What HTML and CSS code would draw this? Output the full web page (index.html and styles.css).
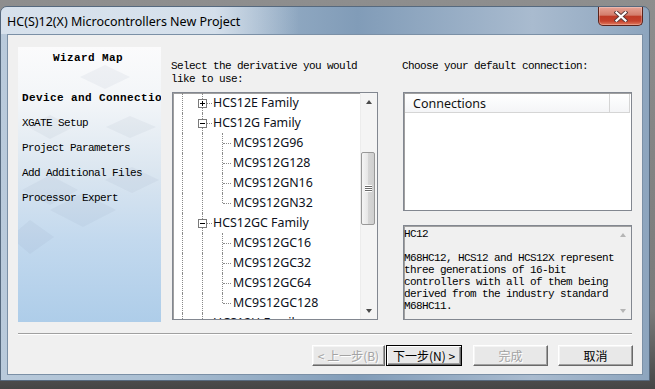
FILE: index.html
```html
<!DOCTYPE html>
<html lang="en">
<head>
  <meta charset="UTF-8">
  <title>HC(S)12(X) Microcontrollers New Project</title>
  <link rel="stylesheet" href="styles.css">
</head>
<body>

  <div class="window">
    <div class="titlebar">
      <span class="title">HC(S)12(X) Microcontrollers New Project</span>
      <div class="close">
        <svg width="14" height="11" viewBox="0 0 14 11">
          <path d="M2.5 1.5 L11.5 9.5 M11.5 1.5 L2.5 9.5" stroke="#5a3a3a" stroke-width="4" stroke-linecap="square" fill="none"/>
          <path d="M2.5 1.5 L11.5 9.5 M11.5 1.5 L2.5 9.5" stroke="#ffffff" stroke-width="2.2" stroke-linecap="square" fill="none"/>
        </svg>
      </div>
    </div>

    <div class="client">
      <div class="main">

        <div class="wizard">
          <svg class="wizard-bg" width="143" height="275" viewBox="0 0 143 275">
            <g fill="#6f859c" fill-opacity="0.07">
              <polygon points="62,30 87,18 112,30 87,42"/>
              <polygon points="10,80 32,68 56,80 32,92"/>
              <polygon points="88,80 112,69 138,80 112,91"/>
              <polygon points="4,143 32,128 60,143 32,158"/>
              <polygon points="32,163 65,146 98,163 65,180"/>
              <polygon points="87,133 114,120 141,133 114,146"/>
              <polygon points="-8,190 12,173 36,190 12,207"/>
            </g>
          </svg>
          <div class="wizard-title">Wizard Map</div>
          <ul class="steps">
            <li class="current">Device and Connection</li>
            <li>XGATE Setup</li>
            <li>Project Parameters</li>
            <li>Add Additional Files</li>
            <li>Processor Expert</li>
          </ul>
        </div>

        <div class="col-derivative">
          <p class="prompt">Select the derivative you would<br>like to use:</p>
          <div class="tree-box">
            <div class="tree">
              <div class="row">
                <div class="cell v"></div>
                <div class="cell v hbox"><span class="toggle plus"></span></div>
                <span class="label">HCS12E Family</span>
              </div>
              <div class="row">
                <div class="cell v"></div>
                <div class="cell v hbox"><span class="toggle"></span></div>
                <span class="label">HCS12G Family</span>
              </div>
              <div class="row">
                <div class="cell v"></div>
                <div class="cell v"></div>
                <div class="cell v h"></div>
                <span class="label">MC9S12G96</span>
              </div>
              <div class="row">
                <div class="cell v"></div>
                <div class="cell v"></div>
                <div class="cell v h"></div>
                <span class="label">MC9S12G128</span>
              </div>
              <div class="row">
                <div class="cell v"></div>
                <div class="cell v"></div>
                <div class="cell v h"></div>
                <span class="label">MC9S12GN16</span>
              </div>
              <div class="row">
                <div class="cell v"></div>
                <div class="cell v"></div>
                <div class="cell v h end"></div>
                <span class="label">MC9S12GN32</span>
              </div>
              <div class="row">
                <div class="cell v"></div>
                <div class="cell v hbox"><span class="toggle"></span></div>
                <span class="label">HCS12GC Family</span>
              </div>
              <div class="row">
                <div class="cell v"></div>
                <div class="cell v"></div>
                <div class="cell v h"></div>
                <span class="label">MC9S12GC16</span>
              </div>
              <div class="row">
                <div class="cell v"></div>
                <div class="cell v"></div>
                <div class="cell v h"></div>
                <span class="label">MC9S12GC32</span>
              </div>
              <div class="row">
                <div class="cell v"></div>
                <div class="cell v"></div>
                <div class="cell v h"></div>
                <span class="label">MC9S12GC64</span>
              </div>
              <div class="row">
                <div class="cell v"></div>
                <div class="cell v"></div>
                <div class="cell v h end"></div>
                <span class="label">MC9S12GC128</span>
              </div>
              <div class="row">
                <div class="cell v"></div>
                <div class="cell v hbox"><span class="toggle plus"></span></div>
                <span class="label">HCS12H Family</span>
              </div>
            </div>
            <div class="vscroll">
              <div class="arrow up"></div>
              <div class="track">
                <div class="thumb"><span class="grip"></span></div>
              </div>
              <div class="arrow down"></div>
            </div>
          </div>
        </div>

        <div class="col-connection">
          <p class="prompt">Choose your default connection:</p>
          <div class="list-box">
            <div class="list-head">
              <span class="head-col name">Connections</span>
              <span class="head-col rest"></span>
            </div>
          </div>
          <div class="desc-box">
            <pre class="desc">HC12

M68HC12, HCS12 and HCS12X represent
three generations of 16-bit
controllers with all of them being
derived from the industry standard
M68HC11.</pre>
            <div class="vscroll flat">
              <div class="arrow up"></div>
              <div class="track"></div>
              <div class="arrow down"></div>
            </div>
          </div>
        </div>

      </div>

      <div class="separator"></div>

      <div class="buttons">
        <button class="btn back" disabled>&lt; 上一步(B)</button>
        <button class="btn next">下一步(N) &gt;</button>
        <button class="btn finish" disabled>完成</button>
        <button class="btn cancel">取消</button>
      </div>
    </div>
  </div>

</body>
</html>
```

FILE: styles.css
```css
* { box-sizing: border-box; }

body {
  margin: 0;
  height: 389px;
  overflow: hidden;
  background: linear-gradient(#8e8e8e, #7a7a7a 80%, #454545);
  font-family: "Liberation Mono", monospace;
}

/* window frame */
.window {
  width: 650px;
  margin-top: 6px;
  padding: 0 6px 5px;
  border: 1px solid #56697e;
  border-radius: 7px 7px 0 0;
  background: linear-gradient(90deg, #b9cadb, #a9bed2 25%, #819cb8 55%, #a9bbcf 82%, #8da5be);
}

.titlebar {
  height: 27px;
  display: flex;
  justify-content: space-between;
  align-items: flex-start;
  background: linear-gradient(90deg, rgba(225,233,242,0.75), rgba(230,237,245,0.75) 33%, rgba(255,255,255,0) 46%);
  margin: 0 -6px;
  padding: 0 6px;
  border-radius: 6px 6px 0 0;
}

.title {
  font-family: "Noto Sans", sans-serif;
  font-size: 12.5px;
  line-height: 27px;
  color: #000;
  padding-top: 1px;
}

.close {
  width: 45px;
  height: 19px;
  display: flex;
  align-items: center;
  justify-content: center;
  border: 1px solid #5b231b;
  border-top: 0;
  border-radius: 0 0 5px 5px;
  background: linear-gradient(#e7a395, #d37d6c 45%, #bf3b27 52%, #c5412c 78%, #e27c60);
  box-shadow: inset 0 0 0 1px rgba(255,255,255,0.25);
}

.close svg { display: block; }

/* dialog body */
.client {
  height: 341px;
  padding: 12px 10px 0;
  background: #f0f0f0;
  border: 1px solid #7b90a6;
}

.main {
  display: flex;
  height: 275px;
}

/* wizard map */
.wizard {
  position: relative;
  width: 143px;
  height: 275px;
  flex: none;
  overflow: hidden;
  background: linear-gradient(#fbfbfc 0%, #f2f5f8 20%, #dbe6f0 45%, #c3d9ee 70%, #aecde9 100%);
}

.wizard-bg {
  position: absolute;
  left: 0;
  top: 0;
}

.wizard-title {
  position: relative;
  margin-top: 4px;
  line-height: 14px;
  font-size: 11px;
  font-weight: bold;
  letter-spacing: 0.4px;
  text-align: center;
  padding-right: 3px;
}

.steps {
  position: relative;
  list-style: none;
  margin: 21px 0 0;
  padding: 0 0 0 4px;
  font-size: 11px;
  letter-spacing: -0.6px;
  line-height: 25px;
  white-space: nowrap;
}

.steps .current {
  font-weight: bold;
  letter-spacing: 0.4px;
}

/* prompts */
.prompt {
  margin: 13px 0 0;
  font-size: 11px;
  letter-spacing: -0.6px;
  line-height: 13px;
  color: #000;
}

.col-derivative {
  width: 207px;
  margin-left: 10px;
  flex: none;
}

.col-connection {
  width: 230px;
  margin-left: 24px;
  flex: none;
}

/* tree view */
.tree-box {
  display: flex;
  width: 206px;
  height: 228px;
  margin: 6px 0 0 1px;
  background: #fff;
  border: 1px solid #828790;
  box-shadow: inset 1px 1px 0 #a0a0a0;
}

.tree {
  flex: 1;
  overflow: hidden;
}

.row {
  display: flex;
  align-items: center;
  height: 20px;
}

.cell {
  position: relative;
  width: 20px;
  height: 20px;
  flex: none;
}

.cell.v::before {
  content: '';
  position: absolute;
  left: 9px;
  top: 0;
  bottom: 0;
  border-left: 1px dotted #8a8a8a;
}

.cell.end::before { bottom: 10px; }

.cell.h::after {
  content: '';
  position: absolute;
  left: 10px;
  top: 10px;
  width: 8px;
  border-top: 1px dotted #8a8a8a;
}

.cell.hbox::after {
  content: '';
  position: absolute;
  left: 14px;
  top: 10px;
  width: 5px;
  border-top: 1px dotted #8a8a8a;
}

.toggle {
  position: absolute;
  left: 5px;
  top: 6px;
  width: 9px;
  height: 9px;
  background: #fff;
  border: 1px solid #7a7a7a;
  z-index: 1;
}

.toggle::before {
  content: '';
  position: absolute;
  left: 1px;
  top: 3px;
  width: 5px;
  height: 1px;
  background: #000;
}

.toggle.plus::after {
  content: '';
  position: absolute;
  left: 3px;
  top: 1px;
  width: 1px;
  height: 5px;
  background: #000;
}

.label {
  font-family: "Noto Sans", sans-serif;
  font-size: 12.4px;
  color: #0c1020;
  white-space: nowrap;
  line-height: 20px;
}

/* scrollbars */
.vscroll {
  width: 17px;
  flex: none;
  display: flex;
  flex-direction: column;
  background: #f4f4f4;
  border-left: 1px solid #ececec;
}

.arrow {
  height: 17px;
  display: flex;
  align-items: center;
  justify-content: center;
}

.arrow::before {
  content: '';
  border-left: 3.5px solid transparent;
  border-right: 3.5px solid transparent;
}

.arrow.up::before { border-bottom: 4px solid #4a4a4a; }
.arrow.down::before { border-top: 4px solid #4a4a4a; }

.track {
  flex: 1;
  padding-top: 42px;
}

.thumb {
  height: 73px;
  margin: 0 2px 0 0;
  border: 1px solid #989898;
  border-radius: 2px;
  background: linear-gradient(90deg, #f5f5f5, #e6e6e6 50%, #d6d6d6 51%, #cfcfcf);
  display: flex;
  align-items: center;
  justify-content: center;
}

.grip {
  width: 7px;
  height: 7px;
  background: repeating-linear-gradient(#fff 0 1px, #6a6a6a 1px 2px);
}

.vscroll.flat {
  background: transparent;
  border-left: 0;
}

.vscroll.flat .arrow.up::before { border-bottom-color: #b5b5b5; }
.vscroll.flat .arrow.down::before { border-top-color: #b5b5b5; }

/* connections list */
.list-box {
  width: 229px;
  height: 119px;
  margin: 19px 0 0 1px;
  background: #fff;
  border: 1px solid #828790;
  box-shadow: inset 1px 1px 0 #a0a0a0;
  padding: 1px 1px 0 1px;
}

.list-head {
  display: flex;
  height: 19px;
  background: linear-gradient(#ffffff, #f4f5f7);
  border-bottom: 1px solid #d5d5d5;
}

.head-col {
  height: 19px;
  border-right: 1px solid #d5d5d5;
  font-family: "Noto Sans", sans-serif;
  font-size: 12.5px;
  line-height: 19px;
  color: #111;
}

.head-col.name {
  width: 206px;
  padding-left: 8px;
}

.head-col.rest { width: 20px; }

/* description */
.desc-box {
  display: flex;
  width: 229px;
  height: 95px;
  margin: 14px 0 0 1px;
  background: #f0f0f0;
  border: 1px solid #828790;
  box-shadow: inset 1px 1px 0 #a0a0a0;
}

.desc {
  flex: 1;
  margin: 0;
  padding: 2px 0 0 0;
  font-family: "Liberation Mono", monospace;
  font-size: 11px;
  letter-spacing: -0.6px;
  line-height: 12px;
  color: #000;
  overflow: hidden;
}

/* footer */
.separator {
  margin-top: 11px;
  height: 2px;
  border-top: 1px solid #a0a0a0;
  border-bottom: 1px solid #ffffff;
}

.buttons {
  display: flex;
  justify-content: flex-end;
  margin: 10px -1px 0 0;
}

.btn {
  height: 21px;
  width: 75px;
  padding: 0;
  font-family: "Noto Sans CJK SC", sans-serif;
  font-size: 12px;
  color: #000;
  background: #e8e8e8;
  border: 1px solid;
  border-color: #ffffff #696969 #696969 #ffffff;
  box-shadow: inset -1px -1px 0 #a0a0a0, inset 1px 1px 0 #f4f4f4;
}

.btn:disabled {
  color: #a3a3a3;
  text-shadow: 1px 1px 0 #fff;
}

.btn.back { width: 73px; }

.btn.next {
  width: 76px;
  margin-left: 1px;
  border: 1px solid #000;
  box-shadow: inset 1px 1px 0 #fff, inset -1px -1px 0 #696969, inset -2px -2px 0 #a0a0a0;
}

.btn.finish { margin-left: 11px; }
.btn.cancel { margin-left: 10px; }
```
